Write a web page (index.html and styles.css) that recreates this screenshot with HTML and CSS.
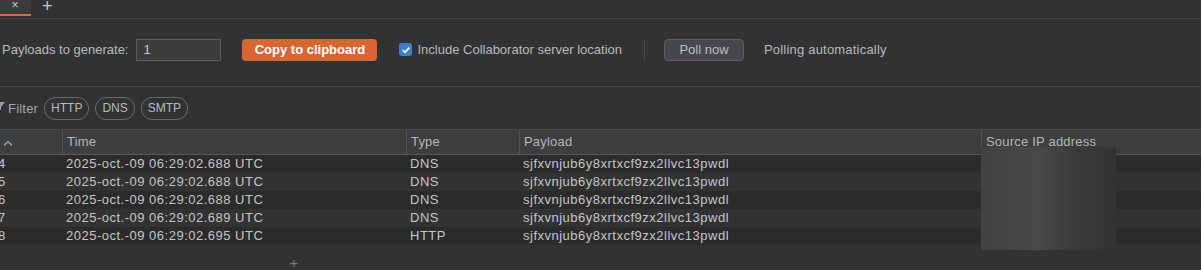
FILE: index.html
```html
<!DOCTYPE html>
<html lang="en">
<head>
    <meta charset="UTF-8">
    <meta name="viewport" content="width=device-width, initial-scale=1.0">
    <title>Collaborator</title>
    <link rel="stylesheet" href="styles.css">
</head>
<body>
    <div class="tabbar">
        <div class="tab"><span class="tab-close">×</span></div>
        <div class="tab-add">+</div>
    </div>

    <div class="controls">
        <label class="field-label" for="count">Payloads to generate:</label>
        <input class="count-input" id="count" type="text" value="1">
        <button class="btn-primary">Copy to clipboard</button>
        <label class="check">
            <span class="checkbox">
                <svg width="10" height="10" viewBox="0 0 10 10"><path d="M1.8 5.2 L4 7.3 L8.3 2.6" fill="none" stroke="#fff" stroke-width="1.6"/></svg>
            </span>
            Include Collaborator server location
        </label>
        <span class="divider"></span>
        <button class="btn-secondary">Poll now</button>
        <span class="status">Polling automatically</span>
    </div>

    <div class="filters">
        <svg class="funnel" width="6" height="8" viewBox="0 0 6 8"><path d="M-4 0 H5 L1 5 V8 H-1 V5 Z" fill="#9a9c9e"/></svg>
        <span class="filter-label">Filter</span>
        <span class="pill">HTTP</span>
        <span class="pill">DNS</span>
        <span class="pill">SMTP</span>
    </div>

    <div class="table">
        <div class="row head">
            <div class="cell c-num">
                <svg width="10" height="6" viewBox="0 0 10 6"><path d="M1 5.5 L5 1.5 L9 5.5" fill="none" stroke="#a9abad" stroke-width="1.2"/></svg>
            </div>
            <div class="cell c-time">Time</div>
            <div class="cell c-type">Type</div>
            <div class="cell c-payload">Payload</div>
            <div class="cell c-ip">Source IP address</div>
        </div>
        <div class="row">
            <div class="cell c-num">4</div>
            <div class="cell c-time">2025-oct.-09 06:29:02.688 UTC</div>
            <div class="cell c-type">DNS</div>
            <div class="cell c-payload">sjfxvnjub6y8xrtxcf9zx2llvc13pwdl</div>
            <div class="cell c-ip"></div>
        </div>
        <div class="row">
            <div class="cell c-num">5</div>
            <div class="cell c-time">2025-oct.-09 06:29:02.688 UTC</div>
            <div class="cell c-type">DNS</div>
            <div class="cell c-payload">sjfxvnjub6y8xrtxcf9zx2llvc13pwdl</div>
            <div class="cell c-ip"></div>
        </div>
        <div class="row">
            <div class="cell c-num">6</div>
            <div class="cell c-time">2025-oct.-09 06:29:02.688 UTC</div>
            <div class="cell c-type">DNS</div>
            <div class="cell c-payload">sjfxvnjub6y8xrtxcf9zx2llvc13pwdl</div>
            <div class="cell c-ip"></div>
        </div>
        <div class="row">
            <div class="cell c-num">7</div>
            <div class="cell c-time">2025-oct.-09 06:29:02.689 UTC</div>
            <div class="cell c-type">DNS</div>
            <div class="cell c-payload">sjfxvnjub6y8xrtxcf9zx2llvc13pwdl</div>
            <div class="cell c-ip"></div>
        </div>
        <div class="row">
            <div class="cell c-num">8</div>
            <div class="cell c-time">2025-oct.-09 06:29:02.695 UTC</div>
            <div class="cell c-type">HTTP</div>
            <div class="cell c-payload">sjfxvnjub6y8xrtxcf9zx2llvc13pwdl</div>
            <div class="cell c-ip"></div>
        </div>
        <div class="redacted"></div>
    </div>

    <div class="splitter">+</div>
</body>
</html>
```

FILE: styles.css
```css
body {
  margin: 0;
  background-color: #313234;
  color: #bbbdbf;
  font-family: 'Liberation Sans', Arial, sans-serif;
  font-size: 13px;
  height: 270px;
  overflow: hidden;
}

.tabbar {
  display: flex;
  align-items: flex-start;
  height: 18px;
  border-bottom: 1px solid #434547;
}

.tab {
  width: 32px;
  height: 14px;
  background-color: #3a3b3d;
  border-left: 2px solid #7a2a22;
  border-bottom: 2px solid #e06a34;
  display: flex;
  justify-content: center;
  margin-left: -3px;
}

.tab-close {
  color: #c8c8c8;
  font-size: 12px;
  line-height: 10px;
}

.tab-add {
  margin-left: 11px;
  color: #c8c8c8;
  font-size: 18px;
  line-height: 12px;
}

.controls {
  display: flex;
  align-items: center;
  height: 23px;
  padding: 19px 0 25px 2px;
  border-bottom: 1px solid #47494b;
}

.field-label {
  color: #b7b9bb;
}

.count-input {
  margin-left: 8px;
  width: 77px;
  height: 20px;
  padding: 0 0 0 6px;
  background-color: #393b3d;
  border: 1px solid #5a5c5e;
  color: #c3c5c7;
  font-family: inherit;
  font-size: 13px;
  box-sizing: content-box;
}

.btn-primary {
  margin-left: 21px;
  width: 135px;
  height: 22px;
  border: none;
  border-radius: 4px;
  background-color: #da6532;
  color: #fff;
  font-family: inherit;
  font-size: 13px;
  font-weight: bold;
}

.check {
  display: flex;
  align-items: center;
  gap: 5px;
  margin-left: 22px;
  color: #b7b9bb;
}

.checkbox {
  width: 13px;
  height: 13px;
  border-radius: 3px;
  background-color: #3f7ec4;
  display: flex;
  align-items: center;
  justify-content: center;
}

.divider {
  width: 1px;
  height: 22px;
  background-color: #4a4c4e;
  margin-left: 22px;
}

.btn-secondary {
  margin-left: 19px;
  width: 80px;
  height: 22px;
  border: 1px solid #5a5c5e;
  border-radius: 4px;
  background-color: #45474a;
  color: #bbbdbf;
  font-family: inherit;
  font-size: 13px;
}

.status {
  margin-left: 20px;
  color: #b7b9bb;
  letter-spacing: 0.2px;
}

.filters {
  display: flex;
  align-items: center;
  height: 23px;
  padding: 10px 0 9px 0;
}

.funnel {
  margin-top: -6px;
}

.filter-label {
  margin-left: 2px;
  color: #a4a6a8;
  letter-spacing: 0.2px;
}

.pill {
  margin-left: 6px;
  height: 21px;
  line-height: 21px;
  padding: 0 6px;
  border: 1px solid #66686a;
  border-radius: 11px;
  color: #b7b9bb;
  font-size: 12px;
}

.pill + .pill {
  margin-left: 6px;
}

.table {
  position: relative;
  border-top: 1px solid #4a4c4e;
}

.row {
  display: flex;
  height: 18px;
  line-height: 18px;
  background-color: #2b2b2b;
}

.row:nth-child(odd) {
  background-color: #323232;
}

.row.head {
  height: 24px;
  line-height: 24px;
  background-color: #3c3e40;
  border-bottom: 1px solid #555759;
}

.cell {
  box-sizing: border-box;
  padding-left: 4px;
  white-space: nowrap;
  overflow: hidden;
  color: #c3c5c7;
  letter-spacing: 0.5px;
}

.head .cell {
  border-left: 1px solid #535557;
  color: #b3b5b7;
  letter-spacing: 0.2px;
}

.head .cell:first-child {
  border-left: none;
}

.c-num {
  width: 62px;
  text-indent: -6px;
}

.head .c-num {
  padding-left: 3px;
  text-indent: 0;
}

.c-time { width: 344px; }
.c-type { width: 113px; }
.c-payload { width: 462px; }
.c-ip { flex: 1; }

.redacted {
  position: absolute;
  left: 981px;
  top: 17px;
  width: 135px;
  height: 103px;
  background: linear-gradient(90deg, #414242 0%, #474848 45%, #3a3a3a 70%, #333333 100%);
}

.splitter {
  text-align: center;
  width: 588px;
  margin-top: 12px;
  color: #77797b;
  font-size: 15px;
  line-height: 12px;
}
```
